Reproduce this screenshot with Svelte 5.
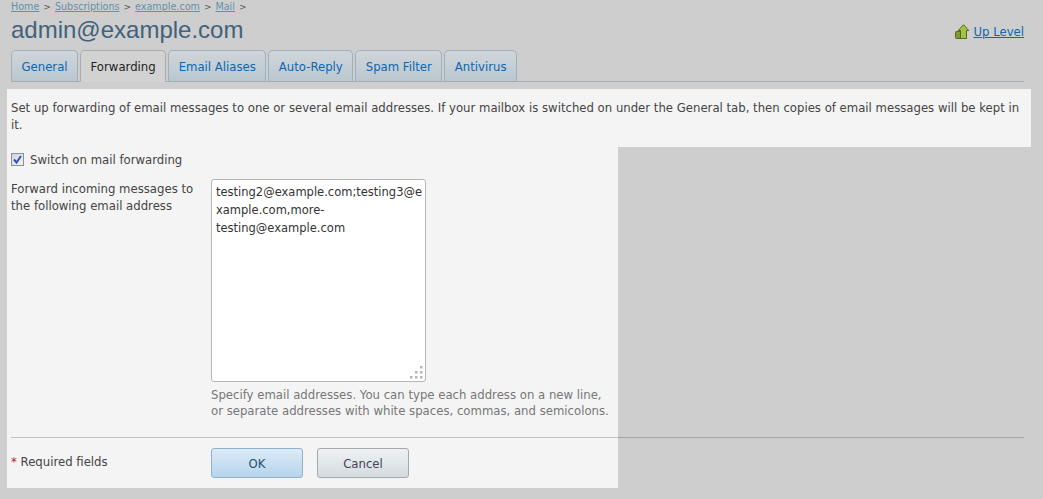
<script lang="ts">
  const crumbs = ["Home", "Subscriptions", "example.com", "Mail"];
  const tabs = ["General", "Forwarding", "Email Aliases", "Auto-Reply", "Spam Filter", "Antivirus"];
  const active = "Forwarding";
</script>

<div class="page">
  <nav class="crumbs">
    {#each crumbs as c}
      <a href="#top">{c}</a><span class="sep">&gt;</span>
    {/each}
  </nav>

  <div class="head">
    <h1>admin@example.com</h1>
    <a class="up" href="#top">
      <svg width="15" height="16" viewBox="0 0 15 16">
        <rect x="0.5" y="7.5" width="6" height="7" rx="1" fill="#7f9a34" stroke="#54691f" />
        <path d="M8.5 0.7 13.8 6.5H11.5V14.5H5.5V6.5H3.2Z" fill="#a2c243" stroke="#54691f" stroke-linejoin="round" />
      </svg>
      <span>Up Level</span>
    </a>
  </div>

  <div class="tabs">
    {#each tabs as t}
      <a class="tab" class:active={t === active} href="#top">{t}</a>
    {/each}
  </div>

  <p class="hint">
    Set up forwarding of email messages to one or several email addresses. If your mailbox is switched on under the General tab, then copies of email messages will be kept in it.
  </p>

  <form class="form">
    <label class="check">
      <span class="box">
        <svg width="9" height="9" viewBox="0 0 9 9"><path d="M1 4.5 3.5 7.5 8 1" fill="none" stroke="#3a4fa8" stroke-width="2" /></svg>
      </span>
      Switch on mail forwarding
    </label>

    <div class="row">
      <div class="label">Forward incoming messages to the following email address</div>
      <div class="field">
        <div class="area">
          testing2@example.com;testing3@e<br />xample.com,more-<br />testing@example.com
          <svg class="grip" width="13" height="13" viewBox="0 0 13 13" fill="#b4b4b4">
            <rect x="10" y="0" width="2.5" height="2.5" />
            <rect x="5" y="5" width="2.5" height="2.5" /><rect x="10" y="5" width="2.5" height="2.5" />
            <rect x="0" y="10" width="2.5" height="2.5" /><rect x="5" y="10" width="2.5" height="2.5" /><rect x="10" y="10" width="2.5" height="2.5" />
          </svg>
        </div>
        <div class="desc">Specify email addresses. You can type each address on a new line, or separate addresses with white spaces, commas, and semicolons.</div>
      </div>
    </div>

    <hr />

    <div class="row foot">
      <div class="label"><span class="star">*</span> Required fields</div>
      <div class="buttons">
        <button type="button" class="btn ok">OK</button>
        <button type="button" class="btn">Cancel</button>
      </div>
    </div>
  </form>
</div>

<style>
  :global(body) {
    background: #cecece;
    overflow: hidden;
  }
  .page {
    font-family: "DejaVu Sans", Verdana, sans-serif;
    font-size: 11.7px;
    color: #444;
    height: 499px;
    box-sizing: border-box;
    padding-top: 1px;
  }
  a {
    color: #0b67b2;
  }
  .crumbs {
    display: flex;
    padding-left: 11px;
    font-size: 9.6px;
    line-height: 12px;
    height: 12px;
  }
  .crumbs a {
    color: #5f92ab;
  }
  .sep {
    margin: 0 4px;
    color: #555;
    font-size: 9px;
  }
  .head {
    display: flex;
    justify-content: space-between;
    align-items: center;
    padding: 0 19px 0 11px;
    height: 37px;
  }
  h1 {
    margin: -3px 0 0;
    font: normal 24px/30px "Liberation Sans", Arial, sans-serif;
    color: #41627c;
  }
  .up {
    display: flex;
    align-items: center;
    gap: 3px;
  }
  .tabs {
    display: flex;
    gap: 2px;
    margin: 0 19px 0 11px;
    height: 31px;
    border-bottom: 1px solid #a6aeb3;
    box-sizing: content-box;
  }
  .tab {
    box-sizing: border-box;
    height: 31px;
    padding: 1px 9.5px 0;
    line-height: 31px;
    border: 1px solid #9fb1bd;
    border-bottom: 0;
    border-radius: 5px 5px 0 0;
    background: linear-gradient(#d0d6da, #bac7cf);
    text-decoration: none;
  }
  .tab.active {
    height: 32px;
    color: #222;
    background: #d2d2d2;
    border-color: #a6aeb3;
  }
  .hint {
    margin: 7px 12px 0 7px;
    padding: 11px 4px 5px;
    background: #f4f4f4;
    line-height: 17px;
    height: 42px;
  }
  .form {
    width: 611px;
    height: 341px;
    margin-left: 7px;
    padding-top: 5px;
    box-sizing: border-box;
    background: #f4f4f4;
  }
  .check {
    display: flex;
    align-items: center;
    gap: 6px;
    padding-left: 4px;
    height: 15px;
  }
  .box {
    display: flex;
    align-items: center;
    justify-content: center;
    box-sizing: border-box;
    width: 13px;
    height: 13px;
    border: 1px solid #8e8f8f;
    background: linear-gradient(135deg, #cfd4e4, #f2f4fa);
  }
  .row {
    display: flex;
    padding-left: 4px;
  }
  .label {
    width: 200px;
    flex: none;
    line-height: 17px;
  }
  .form > .row:not(.foot) {
    margin-top: 12px;
  }
  .form > .row:not(.foot) .label {
    padding: 2px 10px 0 0;
    box-sizing: border-box;
  }
  .area {
    position: relative;
    box-sizing: border-box;
    width: 215px;
    height: 203px;
    padding: 3px 3px 3px 4px;
    border: 1px solid #b5b5b5;
    border-radius: 3px;
    background: #fff;
    font-size: 11.5px;
    line-height: 18px;
    color: #333;
  }
  .grip {
    position: absolute;
    right: 2px;
    bottom: 2px;
  }
  .desc {
    width: 402px;
    margin-top: 5px;
    line-height: 16px;
    color: #777;
  }
  hr {
    width: 1013px;
    height: 1px;
    margin: 18px 0 0 4px;
    border: 0;
    background: rgba(0, 0, 0, 0.2);
  }
  .foot {
    margin-top: 10px;
    align-items: flex-start;
  }
  .foot .label {
    padding-top: 6px;
  }
  .star {
    color: #b3263f;
  }
  .buttons {
    display: flex;
    gap: 14px;
  }
  .btn {
    box-sizing: border-box;
    width: 92px;
    height: 30px;
    padding: 2px 0 0;
    border: 1px solid #a2aab0;
    border-radius: 3px;
    background: linear-gradient(#eef1f3, #d4dce1);
    color: #445;
    font: inherit;
  }
  .btn.ok {
    border-color: #8fb2cf;
    background: linear-gradient(#dcebf7, #b6d4ec);
    color: #24506f;
  }
</style>
